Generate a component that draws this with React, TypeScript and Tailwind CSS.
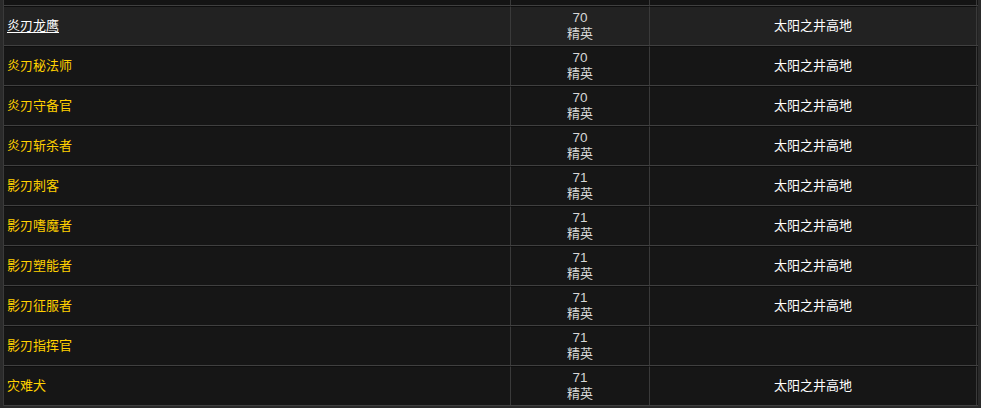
import React from "react";

const rows = [
  { name: "炎刃龙鹰", level: "70", zone: "太阳之井高地", hover: true },
  { name: "炎刃秘法师", level: "70", zone: "太阳之井高地" },
  { name: "炎刃守备官", level: "70", zone: "太阳之井高地" },
  { name: "炎刃斩杀者", level: "70", zone: "太阳之井高地" },
  { name: "影刃刺客", level: "71", zone: "太阳之井高地" },
  { name: "影刃嗜魔者", level: "71", zone: "太阳之井高地" },
  { name: "影刃塑能者", level: "71", zone: "太阳之井高地" },
  { name: "影刃征服者", level: "71", zone: "太阳之井高地" },
  { name: "影刃指挥官", level: "71", zone: "" },
  { name: "灾难犬", level: "71", zone: "太阳之井高地" },
];

export default function App() {
  return (
    <div
      className="w-[981px] h-[408px] overflow-hidden bg-[#2a2a2a] pl-[3px] text-[13px]"
      style={{ fontFamily: '"Liberation Sans", "Noto Sans CJK SC", sans-serif' }}
    >
      <div className="w-[975px] bg-[#161616] border-l border-[#3a3a3a]">
        <div className="h-[6px] grid grid-cols-[507px_139px_327px] border-b border-[#404040] bg-[#141414]">
          <div className="border-r border-[#3a3a3a]" />
          <div className="border-r border-[#3a3a3a]" />
          <div className="border-r border-[#3a3a3a]" />
        </div>
        {rows.map((r, i) => (
          <div
            key={i}
            className={`h-[40px] grid grid-cols-[507px_139px_327px] border-b border-[#404040] ${
              r.hover ? "bg-[#222222]" : "bg-[#161616]"
            }`}
          >
            <div className="flex items-center pl-[3px] border-r border-[#3a3a3a] border-t border-t-[#0e0e0e]">
              <span
                className={
                  r.hover
                    ? "text-white underline underline-offset-2"
                    : "text-[#ffd100]"
                }
              >
                {r.name}
              </span>
            </div>
            <div className="flex flex-col items-center justify-center leading-[16px] text-[#d8d8d8] border-r border-[#3a3a3a] border-t border-t-[#0e0e0e]">
              <span className="text-[13.5px]">{r.level}</span>
              <span>精英</span>
            </div>
            <div className="flex items-center justify-center text-white border-r border-[#3a3a3a] border-t border-t-[#0e0e0e]">
              {r.zone}
            </div>
          </div>
        ))}
      </div>
    </div>
  );
}
